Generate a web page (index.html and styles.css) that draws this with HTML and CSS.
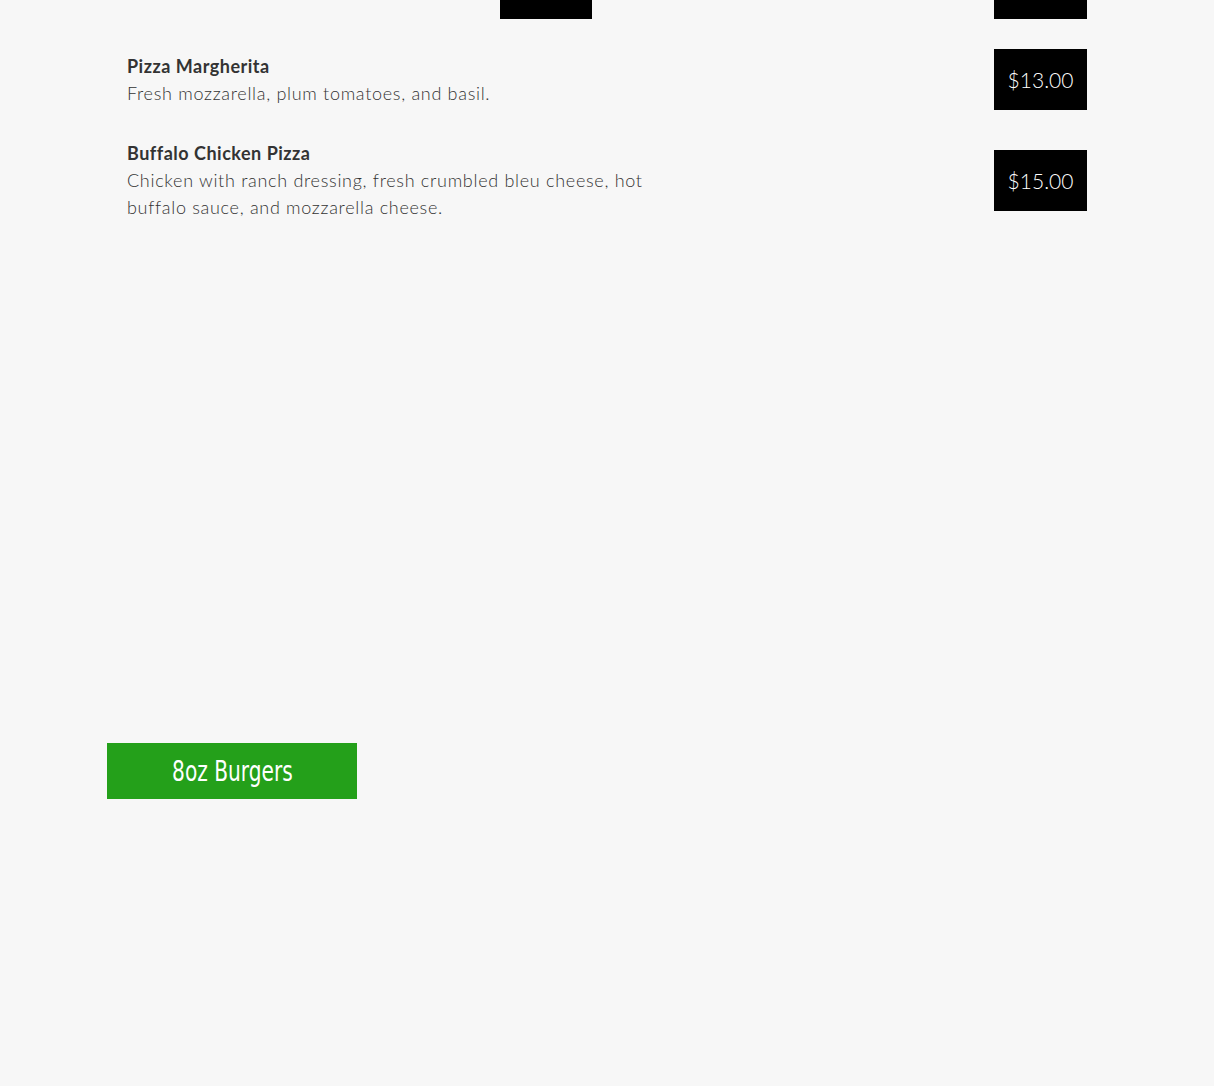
FILE: index.html
```html
<!DOCTYPE html>
<html lang="en">
<head>
    <meta charset="UTF-8">
    <meta name="viewport" content="width=device-width, initial-scale=1.0">
    <title>Menu</title>
    <link rel="stylesheet" href="styles.css">
</head>
<body>
    <div class="menu">
        <div class="item-end">
            <div class="stub stub-left"></div>
            <div class="price stub"></div>
        </div>

        <div class="item">
            <div class="item-text">
                <h3>Pizza Margherita</h3>
                <p>Fresh mozzarella, plum tomatoes, and basil.</p>
            </div>
            <div class="price">$13.00</div>
        </div>

        <div class="item">
            <div class="item-text">
                <h3>Buffalo Chicken Pizza</h3>
                <p>Chicken with ranch dressing, fresh crumbled bleu cheese, hot buffalo sauce, and mozzarella cheese.</p>
            </div>
            <div class="price">$15.00</div>
        </div>

        <div class="section">
            <h2 class="section-title"><span>8oz Burgers</span></h2>
        </div>
    </div>
</body>
</html>
```

FILE: styles.css
```css
body { margin: 0; padding: 0; background: #f7f7f7; font-family: Lato, "Open Sans", sans-serif; }
.menu { width: 960px; margin-left: 127px; height: 1086px; }
.item-end { display: flex; justify-content: space-between; height: 19px; }
.stub { height: 19px; background: #000; }
.stub-left { width: 92px; margin-left: 373px; }
.item { display: flex; justify-content: space-between; align-items: center; margin-top: 30px; }
.item-text { width: 530px; }
.item-text h3 { margin: 0; font-size: 18px; line-height: 27px; font-weight: 700; letter-spacing: 0.5px; color: #333; }
.item-text p { margin: 0; font-size: 18px; line-height: 27px; font-weight: 300; letter-spacing: 0.7px; color: #333; }
.price { width: 93px; height: 61px; background: #000; color: #fff; font-size: 21px; font-weight: 300; display: flex; align-items: center; justify-content: center; }
.price.stub { height: 19px; }
.section { margin-top: 522px; margin-left: -20px; }
.section-title { margin: 0; width: 250px; height: 56px; background: #24a01a; color: #fff; font-family: "DejaVu Sans Condensed", sans-serif; font-weight: 400; font-size: 28px; line-height: 58px; text-align: center; }
.section-title span { display: inline-block; transform: scaleX(0.8); }
```
